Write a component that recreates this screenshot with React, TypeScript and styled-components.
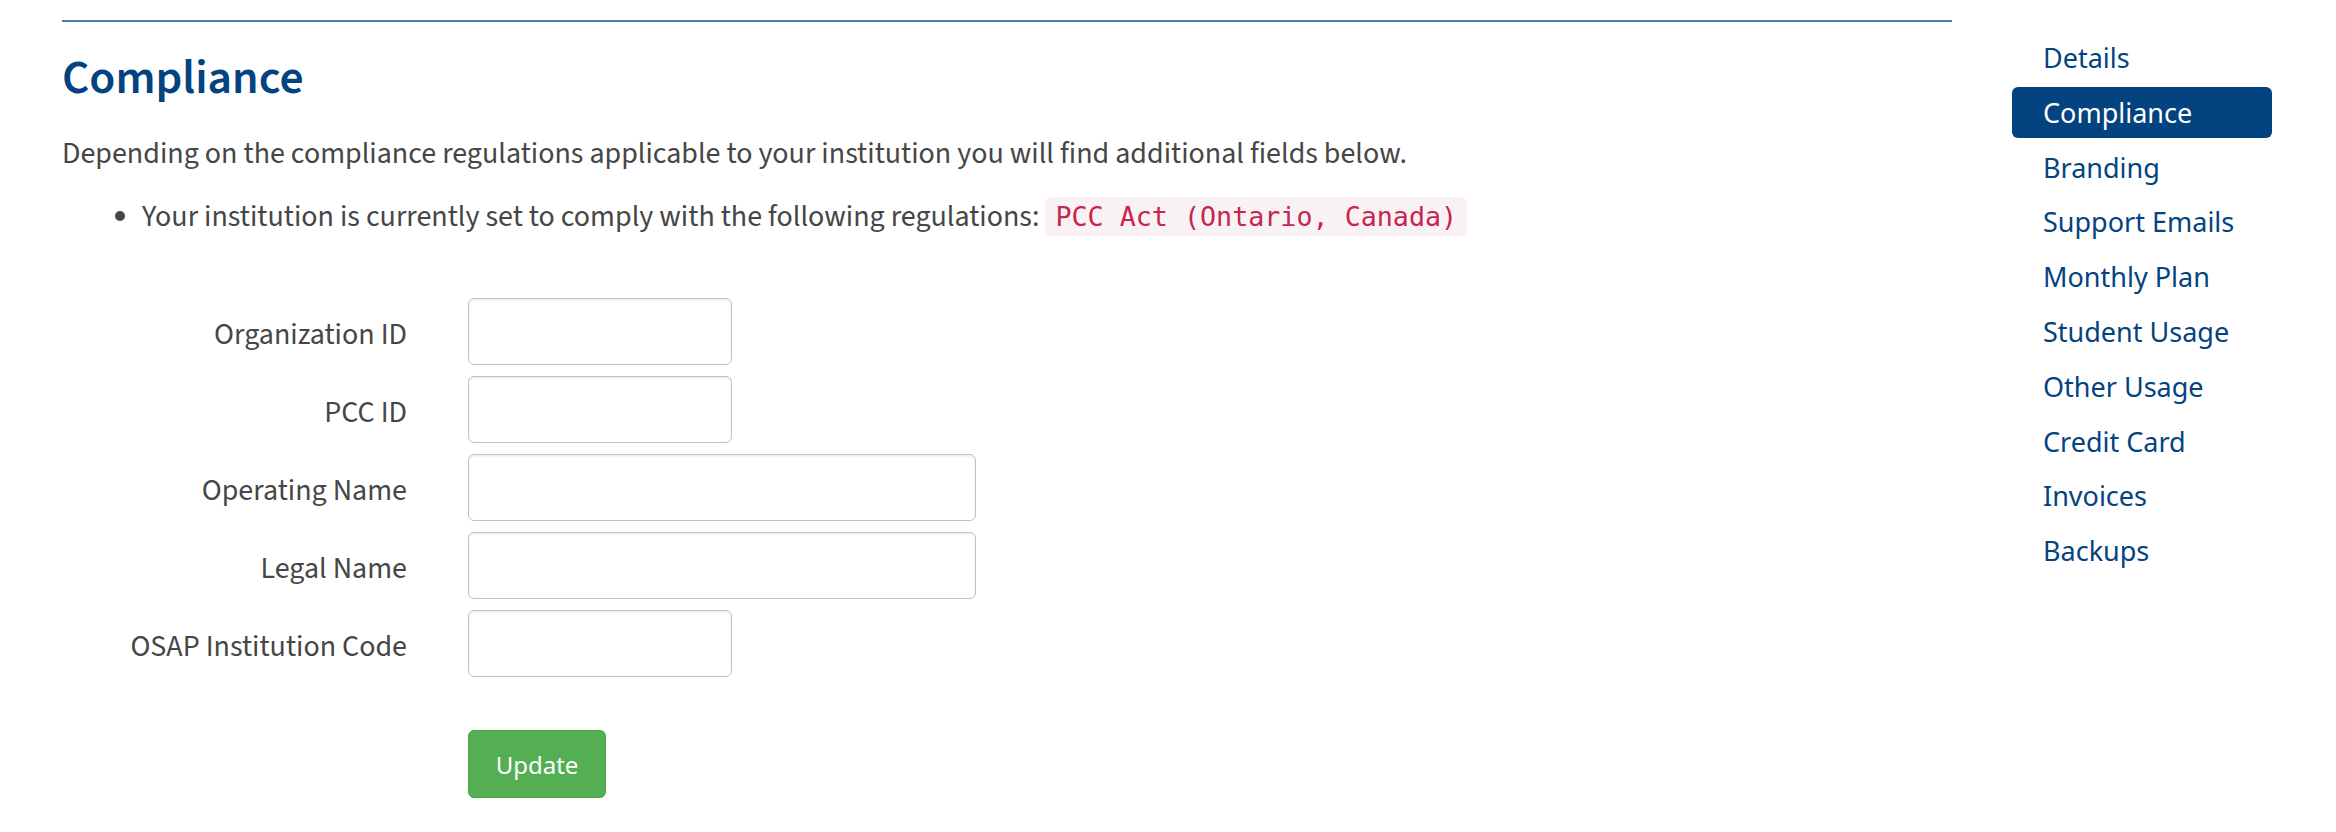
import React from "react";
import styled, { createGlobalStyle } from "styled-components";

const GlobalStyle = createGlobalStyle`
  html, body {
    margin: 0;
    padding: 0;
    background: #ffffff;
  }

  body {
    font-family: "Source Sans 3", "Open Sans", sans-serif;
    font-size: 30px;
    line-height: 1.42857;
    color: #464646;
  }

  * {
    box-sizing: border-box;
  }
`;

const navItems = [
  "Details",
  "Compliance",
  "Branding",
  "Support Emails",
  "Monthly Plan",
  "Student Usage",
  "Other Usage",
  "Credit Card",
  "Invoices",
  "Backups",
];

const fields = [
  { label: "Organization ID", wide: false },
  { label: "PCC ID", wide: false },
  { label: "Operating Name", wide: true },
  { label: "Legal Name", wide: true },
  { label: "OSAP Institution Code", wide: false },
];

export default function App() {
  return (
    <>
      <GlobalStyle />
      <Page>
        <Main>
          <Heading>Compliance</Heading>
          <Intro>
            Depending on the compliance regulations applicable to your
            institution you will find additional fields below.
          </Intro>
          <List>
            <li>
              Your institution is currently set to comply with the following
              regulations: <Code>PCC Act (Ontario, Canada)</Code>
            </li>
          </List>

          <Form onSubmit={(e) => e.preventDefault()}>
            {fields.map((f) => (
              <React.Fragment key={f.label}>
                <Label htmlFor={f.label}>{f.label}</Label>
                <Input id={f.label} type="text" $wide={f.wide} />
              </React.Fragment>
            ))}
            <Actions>
              <UpdateButton type="submit">Update</UpdateButton>
            </Actions>
          </Form>
        </Main>

        <Nav>
          {navItems.map((item) => (
            <NavLink key={item} href="#" $active={item === "Compliance"}>
              {item}
            </NavLink>
          ))}
        </Nav>
      </Page>
    </>
  );
}

const Page = styled.div`
  display: grid;
  grid-template-columns: 1fr 260px;
  column-gap: 60px;
  padding: 20px 64px 0 62px;
  width: 2336px;
`;

const Main = styled.main`
  border-top: 2px solid #4c7bab;
`;

const Heading = styled.h2`
  margin: 28px 0 0;
  font-size: 47.5px;
  font-weight: 600;
  line-height: 1.2;
  color: #03437f;
`;

const Intro = styled.p`
  margin: 26px 0 0;
`;

const List = styled.ul`
  margin: 20px 0 0;
  padding-left: 80px;
  list-style: disc;
`;

const Code = styled.code`
  font-family: "DejaVu Sans Mono", monospace;
  font-size: 26.7px;
  color: #c7254e;
  background: #f9f2f4;
  border-radius: 6px;
  padding: 4px 10px;
`;

const Form = styled.form`
  display: grid;
  grid-template-columns: 345px 1fr;
  column-gap: 61px;
  row-gap: 11px;
  margin-top: 59.5px;
`;

const Label = styled.label`
  text-align: right;
  padding-top: 16px;
  color: #464646;
`;

const Input = styled.input<{ $wide: boolean }>`
  width: ${(p) => (p.$wide ? "508px" : "264px")};
  height: 67px;
  border: 1.5px solid #c2c2c2;
  border-radius: 6px;
  box-shadow: inset 0 1.5px 1.5px rgba(0, 0, 0, 0.075);
  font: inherit;
  padding: 0 18px;
  background: #ffffff;
`;

const Actions = styled.div`
  grid-column: 2;
  margin-top: 42px;
`;

const UpdateButton = styled.button`
  width: 138px;
  height: 68px;
  border: 1.5px solid #4aa84a;
  border-radius: 6px;
  background: #54ae54;
  color: #ffffff;
  font-family: "Noto Sans", "Open Sans", sans-serif;
  font-size: 24px;
  cursor: pointer;
`;

const Nav = styled.nav`
  display: flex;
  flex-direction: column;
  gap: 3.8px;
  padding-top: 12px;
`;

const NavLink = styled.a<{ $active: boolean }>`
  display: block;
  height: 51px;
  line-height: 51px;
  padding-left: 31px;
  border-radius: 6px;
  font-family: "Noto Sans", "Open Sans", sans-serif;
  font-size: 27px;
  text-decoration: none;
  white-space: nowrap;
  color: ${(p) => (p.$active ? "#ffffff" : "#03437f")};
  background: ${(p) => (p.$active ? "#03437f" : "transparent")};
`;
